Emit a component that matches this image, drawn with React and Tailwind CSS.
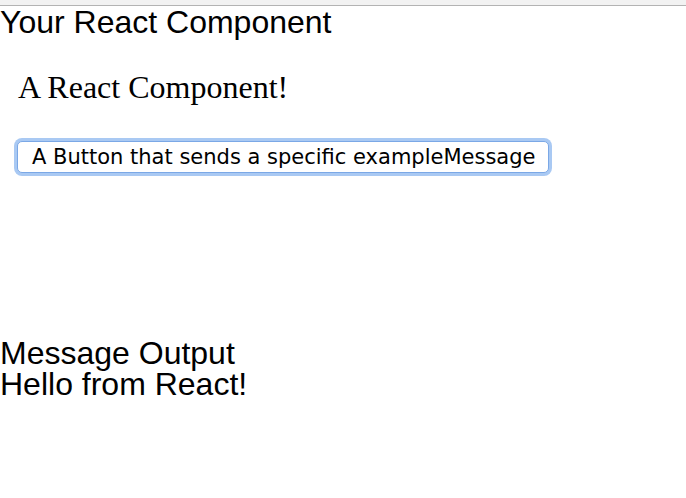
import React, { useState } from 'react'

export default function App() {
  const [message, setMessage] = useState('Hello from React!')

  return (
    <div className="min-h-[498px] w-[686px] bg-white text-black">
      <div className="h-[6px] border-b border-[#b3b3b3] bg-[#f2f2f2]" />
      <h1 className="font-['Liberation_Sans',Arial,sans-serif] text-[32px] leading-none">
        Your React Component
      </h1>
      <p className="ml-[18px] mt-[33px] font-['Liberation_Serif','Times_New_Roman',serif] text-[32px] leading-none">
        A React Component!
      </p>
      <button
        type="button"
        onClick={() => setMessage('Hello from React!')}
        className="ml-[17px] mt-[38px] flex h-[32px] w-[532px] items-center rounded-[5px] border border-[#7ba8e6] bg-white pl-[14px] pt-[1px] font-['DejaVu_Sans',Verdana,sans-serif] text-[21px] leading-none ring-[3px] ring-[#a9c9f3]"
      >
        A Button that sends a specific exampleMessage
      </button>
      <div className="mt-[165px] font-['Liberation_Sans',Arial,sans-serif] text-[32px] leading-[31px]">
        <div>Message Output</div>
        <div>{message}</div>
      </div>
    </div>
  )
}
